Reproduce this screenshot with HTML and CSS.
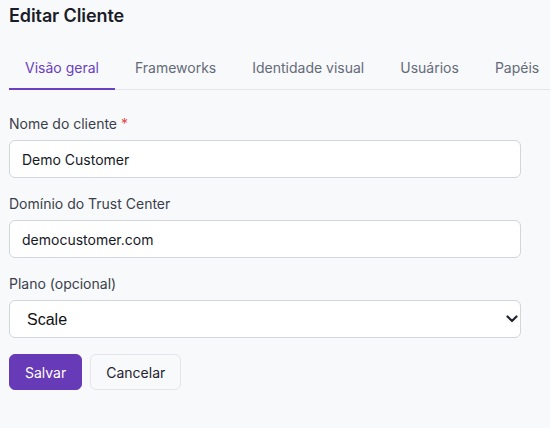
FILE: index.html
```html
<!DOCTYPE html>
<html lang="pt-BR">
<head>
<meta charset="utf-8">
<title>Editar Cliente</title>
<link rel="stylesheet" href="styles.css">
</head>
<body>
<main class="page">
  <h1 class="page-title">Editar Cliente</h1>

  <nav class="tabs">
    <a class="tab tab-active" href="#">Visão geral</a>
    <a class="tab" href="#">Frameworks</a>
    <a class="tab" href="#">Identidade visual</a>
    <a class="tab" href="#">Usuários</a>
    <a class="tab" href="#">Papéis</a>
  </nav>

  <form class="form">
    <div class="field">
      <label class="label" for="name">Nome do cliente <span class="required">*</span></label>
      <input class="input" id="name" type="text" value="Demo Customer">
    </div>
    <div class="field">
      <label class="label" for="domain">Domínio do Trust Center</label>
      <input class="input" id="domain" type="text" value="democustomer.com">
    </div>
    <div class="field">
      <label class="label" for="plan">Plano (opcional)</label>
      <div class="select-wrap">
        <select class="select" id="plan">
          <option>Scale</option>
        </select>
        <svg class="select-chevron" width="12" height="8" viewBox="0 0 12 8" aria-hidden="true">
          <path d="M1.5 1.5 L6 6 L10.5 1.5" fill="none" stroke="#1f2430" stroke-width="2.2" stroke-linecap="round" stroke-linejoin="round"/>
        </svg>
      </div>
    </div>
    <div class="actions">
      <button type="button" class="btn btn-primary">Salvar</button>
      <button type="button" class="btn btn-secondary">Cancelar</button>
    </div>
  </form>
</main>
</body>
</html>
```

FILE: styles.css
```css
* {
  box-sizing: border-box;
}

html, body {
  margin: 0;
  background: #f8f9fb;
}

body {
  font-family: Inter, "Noto Sans", sans-serif;
  color: #1f2430;
  overflow: hidden;
}

.page {
  padding: 4px 0 0 9px;
}

.page-title {
  margin: 0;
  font-size: 18px;
  line-height: 24px;
  font-weight: 600;
  color: #1a1d29;
  letter-spacing: -0.1px;
}

.tabs {
  display: flex;
  gap: 4px;
  margin-top: 17px;
  border-bottom: 1px solid #e3e5ea;
  white-space: nowrap;
}

.tab {
  display: block;
  padding: 13px 16px 10px;
  font-size: 14px;
  line-height: 20px;
  color: #646b78;
  text-decoration: none;
  border-bottom: 2px solid transparent;
  margin-bottom: -1px;
}

.tab-active {
  color: #6a3fc2;
  border-bottom-color: #6a3fc2;
}

.form {
  width: 512px;
  padding-top: 24px;
}

.field {
  display: flex;
  flex-direction: column;
  gap: 6px;
  margin-bottom: 16px;
}

.label {
  font-size: 14px;
  line-height: 20px;
  color: #3a3f4b;
}

.required {
  color: #e5484d;
}

.input,
.select {
  width: 100%;
  height: 38px;
  border: 1px solid #d2d5db;
  border-radius: 6px;
  background: #ffffff;
  font-family: Inter, "Noto Sans", sans-serif;
  font-size: 14px;
  color: #16181f;
  padding: 0 12px;
  outline: none;
}

.select-wrap {
  position: relative;
}

.select {
  appearance: none;
  -webkit-appearance: none;
  font-family: "Liberation Sans", Arial, sans-serif;
  font-size: 16px;
  padding-left: 17px;
  color: #111;
}

.select-chevron {
  position: absolute;
  right: 3px;
  top: 15px;
  pointer-events: none;
}

.actions {
  display: flex;
  gap: 8px;
}

.btn {
  height: 36px;
  padding: 0 15px;
  border-radius: 6px;
  font-family: Inter, "Noto Sans", sans-serif;
  font-size: 14px;
  border: 1px solid transparent;
  cursor: pointer;
}

.btn-primary {
  background: #673ab7;
  border-color: #673ab7;
  color: #ffffff;
}

.btn-secondary {
  background: #f8f9fb;
  border-color: #e3e5ea;
  color: #1f2430;
}
```
